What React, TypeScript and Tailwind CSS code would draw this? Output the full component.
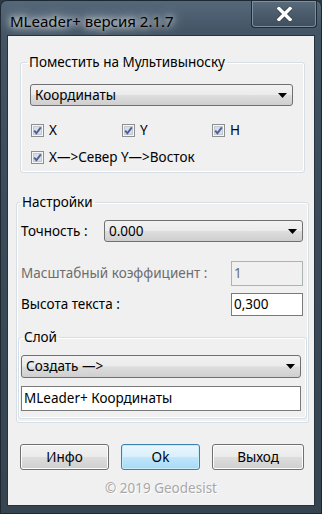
import React from "react";

const font = { fontFamily: '"Noto Sans", "Liberation Sans", sans-serif' };

function Arrow() {
  return (
    <svg width="9" height="5" viewBox="0 0 9 5" className="shrink-0">
      <path d="M0 0H9L4.5 5Z" fill="#000" />
    </svg>
  );
}

function Combo({ text, cls }: { text: string; cls: string }) {
  return (
    <div
      className={`flex items-center justify-between rounded-[3px] border border-[#707070] bg-[linear-gradient(180deg,#f2f2f2_0%,#ebebeb_48%,#dddddd_52%,#cfcfcf_100%)] pl-[4px] pr-[5px] text-[13.5px] text-black ${cls}`}
    >
      <span>{text}</span>
      <Arrow />
    </div>
  );
}

function Check({ label, cls }: { label: string; cls?: string }) {
  return (
    <div className={`flex h-[13px] items-center gap-[5px] ${cls ?? ""}`}>
      <svg width="13" height="13" viewBox="0 0 13 13" className="shrink-0">
        <rect x="0.5" y="0.5" width="12" height="12" fill="#f6f6f6" stroke="#8e8f8f" />
        <rect x="2.5" y="2.5" width="8" height="8" fill="#d9dee6" stroke="#c3c9d2" />
        <path d="M3.2 6.6 L5.4 9.2 L9.8 3.4" stroke="#4b5f96" strokeWidth="1.9" fill="none" />
      </svg>
      <span className="text-[13.5px] leading-none text-black">{label}</span>
    </div>
  );
}

function Btn({ text, cls, primary }: { text: string; cls: string; primary?: boolean }) {
  return (
    <div
      className={`flex h-[26px] items-center justify-center rounded-[3px] border text-[13.5px] text-black ${
        primary
          ? "border-[#3c7fb1] bg-[linear-gradient(180deg,#eaf6fd_0%,#d9f0fc_48%,#bee6fd_52%,#a7d9f5_100%)] shadow-[inset_0_0_0_1px_#c9ecfc]"
          : "border-[#707070] bg-[linear-gradient(180deg,#f2f2f2_0%,#ebebeb_48%,#dddddd_52%,#cfcfcf_100%)] shadow-[inset_0_0_0_1px_#fcfcfc]"
      } ${cls}`}
    >
      {text}
    </div>
  );
}

export default function App() {
  return (
    <div style={font} className="h-[514px] w-[322px] overflow-hidden bg-[#2b3947]">
      <div className="flex h-[514px] w-[322px] flex-col rounded-t-[7px] border border-[#1d2833] bg-[linear-gradient(180deg,#55687a_0%,#435465_6%,#3b4b5b_40%,#35444f_100%)]">
        {/* Title bar */}
        <div className="flex h-[35px] shrink-0 items-start justify-between">
          <div className="pl-[9px] pt-[10px] text-[15px] leading-[20px] text-black [text-shadow:0_0_6px_#ffffff,0_0_12px_rgba(255,255,255,0.9),0_0_18px_rgba(255,255,255,0.6)]">
            MLeader+ версия 2.1.7
          </div>
          <div className="mr-[4px] flex h-[27px] w-[66px] items-center justify-center rounded-b-[4px] border border-t-0 border-[#1f2a35] bg-[linear-gradient(180deg,#5a6b7c_0%,#4a5b6c_50%,#3f4f60_100%)] shadow-[inset_0_0_0_1px_#7f8fa0]">
            <svg width="15" height="14" viewBox="0 0 15 14">
              <path d="M2 1.5 L13 12.5 M13 1.5 L2 12.5" stroke="#2a3642" strokeWidth="4.8" strokeLinecap="square" />
              <path d="M2 1.5 L13 12.5 M13 1.5 L2 12.5" stroke="#ffffff" strokeWidth="3.4" strokeLinecap="square" />
            </svg>
          </div>
        </div>

        {/* Client area */}
        <div className="mx-[7px] flex h-[469px] w-[306px] flex-col bg-[#f0f0f0] text-[13.5px] text-black shadow-[0_0_0_1px_#26323e]">
          {/* Group 1 */}
          <fieldset className="ml-[12px] mt-[18px] w-[285px] rounded-[3px] border border-[#d5dfe5] shadow-[inset_0_0_0_1px_#ffffff]">
            <legend className="ml-[6px] px-[2px] text-[13.5px] leading-[16px]">Поместить на Мультивыноску</legend>
            <div className="flex flex-col pb-[8px] pl-[9px]">
              <Combo text="Координаты" cls="mt-[14px] h-[22px] w-[263px]" />
              <div className="mt-[18px] flex">
                <Check label="X" cls="ml-[1px] w-[91px]" />
                <Check label="Y" cls="w-[90px]" />
                <Check label="H" />
              </div>
              <Check label="X—>Север Y—>Восток" cls="ml-[1px] mt-[14px]" />
            </div>
          </fieldset>

          {/* Group 2 */}
          <fieldset className="ml-[8px] mt-[21px] w-[293px] rounded-[3px] border border-[#d5dfe5] shadow-[inset_0_0_0_1px_#ffffff]">
            <legend className="ml-[3px] px-[2px] text-[13.5px] leading-[16px]">Настройки</legend>
            <div className="flex flex-col pb-[3px]">
              <div className="mt-[10px] flex items-center pl-[4px] pr-[5px]">
                <span className="w-[83px]">Точность :</span>
                <Combo text="0.000" cls="h-[22px] w-[199px]" />
              </div>
              <div className="mt-[19px] flex items-center justify-between pl-[4px] pr-[5px]">
                <span className="text-[#6d6d6d]">Масштабный коэффициент :</span>
                <div className="flex h-[25px] w-[72px] items-center border border-[#adb2b5] bg-[#f0f0f0] pl-[2px] text-[#6d6d6d]">1</div>
              </div>
              <div className="mt-[7px] flex items-center justify-between pl-[4px] pr-[5px]">
                <span>Высота текста :</span>
                <div className="flex h-[23px] w-[72px] items-center border border-[#7a7a7a] bg-white pl-[2px]">0,300</div>
              </div>

              {/* Слой group */}
              <fieldset className="mx-[1px] mt-[13px] rounded-[3px] border border-[#d5dfe5] shadow-[inset_0_0_0_1px_#ffffff]">
                <legend className="ml-[3px] px-[2px] text-[13.5px] leading-[16px]">Слой</legend>
                <div className="flex flex-col pb-[7px] pl-[2px] pr-[5px]">
                  <Combo text="Создать —>" cls="mt-[10px] h-[23px] w-[280px]" />
                  <div className="mt-[8px] flex h-[25px] w-[280px] items-center border border-[#7a7a7a] bg-white pl-[2px]">
                    MLeader+ Координаты
                  </div>
                </div>
              </fieldset>
            </div>
          </fieldset>

          {/* Buttons */}
          <div className="ml-[12px] mt-[21px] flex gap-[12px]">
            <Btn text="Инфо" cls="w-[89px]" />
            <Btn text="Ok" cls="w-[79px]" primary />
            <Btn text="Выход" cls="w-[92px]" />
          </div>

          <div className="mt-[10px] text-center text-[13.5px] leading-[16px] text-[#a8a8a8] [text-shadow:1px_1px_0_#ffffff]">
            © 2019 Geodesist
          </div>
        </div>
      </div>
    </div>
  );
}
